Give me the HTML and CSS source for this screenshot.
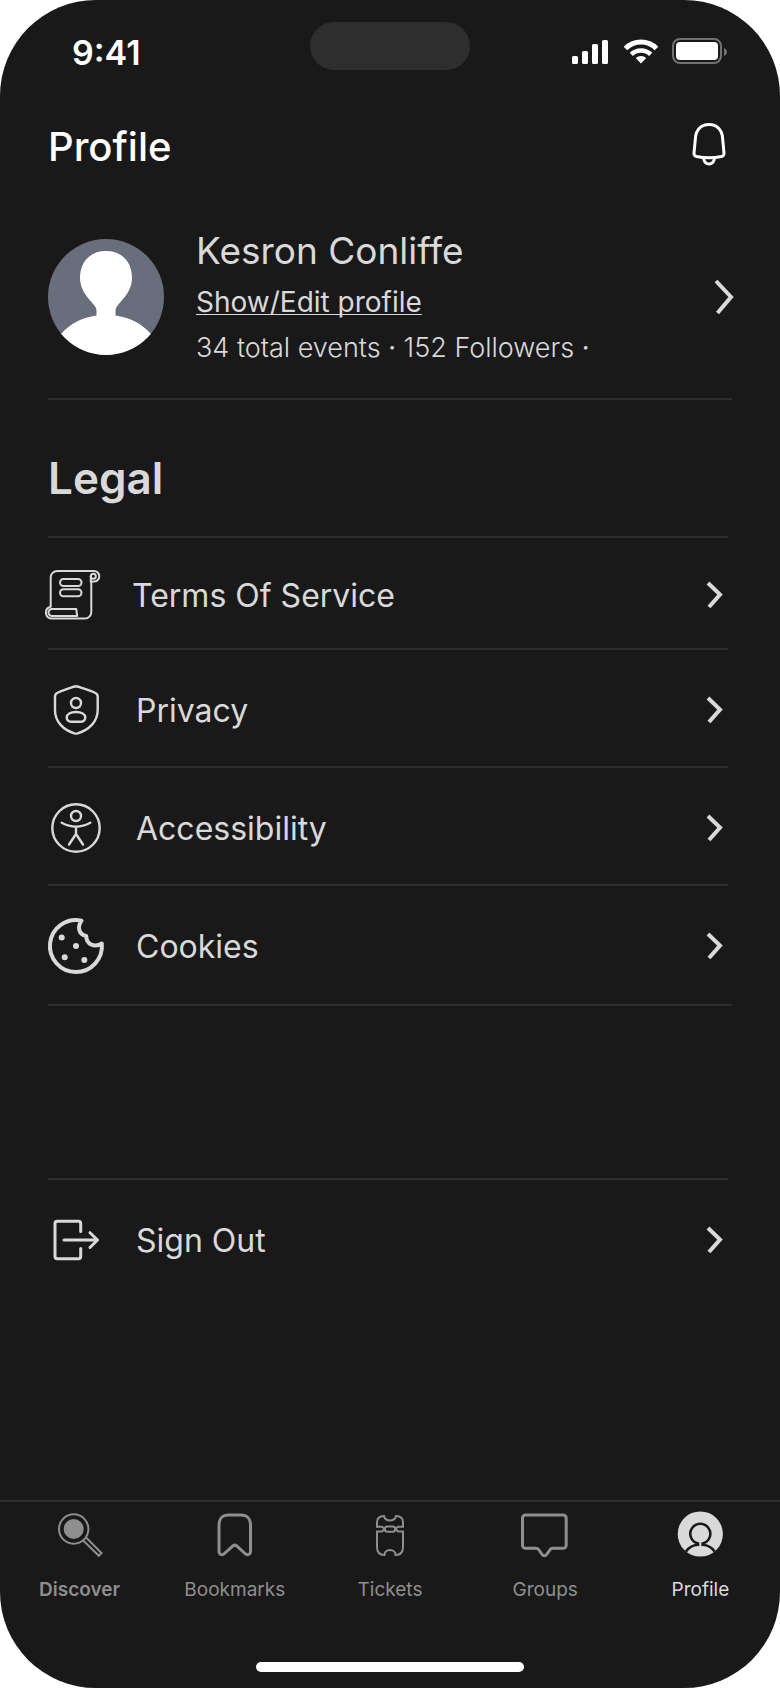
FILE: index.html
```
<!DOCTYPE html>
<html lang="en">
<head>
    <meta charset="UTF-8">
    <meta name="viewport" content="width=device-width, initial-scale=1">
    <title>Profile</title>
    <link rel="stylesheet" href="styles.css">
</head>
<body>
<div class="phone">
    <div class="status-bar">
        <span class="time">9:41</span>
        <span class="island"></span>
        <div class="status-icons">
            <svg width="36" height="28" viewBox="0 0 36 28" fill="#fff">
                <rect x="0" y="18" width="6" height="8" rx="1.5"/>
                <rect x="10" y="13" width="6" height="13" rx="1.5"/>
                <rect x="20" y="6" width="6" height="20" rx="1.5"/>
                <rect x="30" y="2" width="6" height="24" rx="1.5"/>
            </svg>
            <svg width="36" height="28" viewBox="0 0 36 28" fill="none" stroke="#fff">
                <path d="M3.500 10.500a22 22 0 0 1 31 0" stroke-width="5"/>
                <path d="M9.300 16.400a14 14 0 0 1 19.400 0" stroke-width="4.600"/>
                <path d="M19 25.500l-5.300-5.400a8 8 0 0 1 10.600 0z" fill="#fff" stroke="none"/>
            </svg>
            <svg width="56" height="28" viewBox="0 0 56 28">
                <rect x="1" y="1" width="48" height="24" rx="7" fill="none" stroke="#717171" stroke-width="2"/>
                <rect x="4" y="4" width="42" height="18" rx="4" fill="#fff"/>
                <path d="M52 10c4 1.500 4 6.500 0 8z" fill="#717171"/>
            </svg>
        </div>
    </div>

    <header>
        <h1>Profile</h1>
        <button type="button" class="bell" aria-label="Notifications">
            <svg width="44" height="48" viewBox="0 0 44 48" fill="none" stroke="#fff" stroke-width="3">
                <path d="M21 2.500c-8 0-13 5.500-13.500 13L6 31c-.2 2 .5 3 2.500 3.500 8 1.600 17 1.600 25 0 2-.5 2.700-1.500 2.500-3.500l-1.500-15.500C34 8 29 2.500 21 2.500z"/>
                <path d="M15.500 36.500c.8 3.500 2.700 5.500 5.500 5.500s4.700-2 5.500-5.500"/>
            </svg>
        </button>
    </header>

    <main>
        <section class="user">
            <svg class="avatar" width="116" height="116" viewBox="0 0 116 116">
                <clipPath id="round"><circle cx="58" cy="58" r="58"/></clipPath>
                <g clip-path="url(#round)">
                    <rect width="116" height="116" fill="#686e7b"/>
                    <path d="M58 12C41 12 32 24 32 39c0 12 8 20 14 27 2 2.300 2.500 4 2.500 6v4.500C34 79 24 83 13 95v21h90V95C92 83 82 79 67.500 76.500V72c0-2 .5-3.700 2.500-6 6-7 14-15 14-27 0-15-9-27-26-27z" fill="#fff"/>
                </g>
            </svg>
            <div class="user-info">
                <h2>Kesron Conliffe</h2>
                <a href="#edit">Show/Edit profile</a>
                <p>34 total events <b>·</b> 152 Followers <b>·</b></p>
            </div>
            <svg class="chevron-large" width="24" height="40" viewBox="0 0 24 40">
                <path d="M8 4l15 16L9.500 36"/>
            </svg>
        </section>
        <hr>

        <h2 class="section-title">Legal</h2>
        <ul class="menu">
            <li>
                <a class="row row-terms" href="#terms">
                    <svg class="icon" viewBox="0 0 56 56" stroke-width="2">
                        <path d="M2.700 39.700V10.500A6.500 6.500 0 0 1 9.200 4H46a5.300 5.300 0 1 1 0 10.600h-2.700V45a6.500 6.500 0 0 1-6.500 6.500H3a6 6 0 0 1-.3-11.800"/>
                        <path d="M28.200 42H4a3.500 3.500 0 0 0 0 7H29.200z"/>
                        <path d="M42.800 15V9.300"/>
                        <circle cx="45.300" cy="9.300" r="2.500"/>
                        <rect x="12" y="12" width="21.500" height="7" rx="3.500"/>
                        <rect x="12" y="22.300" width="21.500" height="7" rx="3.500"/>
                    </svg>
                    <span>Terms Of Service</span>
                    <svg class="chevron" viewBox="0 0 24 32"><path d="M4 4l12 11.500L5 28"/></svg>
                </a>
            </li>
            <li>
                <a class="row" href="#privacy">
                    <svg class="icon" viewBox="0 0 56 56">
                        <path d="M28 4.300c1.500 0 14 4.300 18.500 6.200 2 .8 3.200 2 3.200 4V28c0 12-9 20-20 23.300-1 .4-2.400.4-3.400 0C15.500 48 7 40 7 28V14.500c0-2 1-3.200 3-4C14.500 8.600 26.500 4.300 28 4.300z"/>
                        <circle cx="28" cy="21" r="5"/>
                        <path d="M28 30c-5.500 0-9.300 2.400-9.300 5.500 0 2.500 2 4.300 5 4.300h8.600c3 0 5-1.800 5-4.300C37.300 32.400 33.500 30 28 30z"/>
                    </svg>
                    <span>Privacy</span>
                    <svg class="chevron" viewBox="0 0 24 32"><path d="M4 4l12 11.500L5 28"/></svg>
                </a>
            </li>
            <li>
                <a class="row" href="#accessibility">
                    <svg class="icon" viewBox="0 0 56 56">
                        <circle cx="28" cy="28" r="23.700"/>
                        <circle cx="28" cy="16" r="5"/>
                        <path d="M13.700 22.700c9.500 5.300 19 5.300 28.600 0M28 27v8M21 44.500l7-10.500 7 10.500"/>
                    </svg>
                    <span>Accessibility</span>
                    <svg class="chevron" viewBox="0 0 24 32"><path d="M4 4l12 11.500L5 28"/></svg>
                </a>
            </li>
            <li>
                <a class="row" href="#cookies">
                    <svg class="icon" viewBox="0 0 56 56" stroke-width="4">
                        <path d="M33.500 2.600A26 26 0 1 0 53.800 25.500c-7 4.300-15.600 1-15.600-7.500-7-1.500-9.500-8.500-4.700-15.400z"/>
                        <g fill="#d9d9d9" stroke="none">
                            <circle cx="13.700" cy="19.500" r="3"/>
                            <circle cx="28" cy="28" r="3"/>
                            <circle cx="16.700" cy="39.300" r="3"/>
                            <circle cx="36.300" cy="42" r="3"/>
                        </g>
                    </svg>
                    <span>Cookies</span>
                    <svg class="chevron" viewBox="0 0 24 32"><path d="M4 4l12 11.500L5 28"/></svg>
                </a>
            </li>
        </ul>
        <hr>

        <ul class="menu menu-account">
            <li>
                <a class="row" href="#signout">
                    <svg class="icon" viewBox="0 0 56 56" stroke-width="3">
                        <path d="M32.700 19.500V11.500a2.200 2.200 0 0 0-2.200-2.200H9.200A2.200 2.200 0 0 0 7 11.500v33a2.200 2.200 0 0 0 2.200 2.200h21.300a2.200 2.200 0 0 0 2.200-2.200v-8"/>
                        <path d="M16 28h33M42 20.700l7.500 7.300-7.500 7.500"/>
                    </svg>
                    <span>Sign Out</span>
                    <svg class="chevron" viewBox="0 0 24 32"><path d="M4 4l12 11.500L5 28"/></svg>
                </a>
            </li>
        </ul>
    </main>

    <nav>
        <a class="tab tab-bold" href="#discover">
            <svg viewBox="0 0 48 48" stroke-width="2">
                <circle cx="17.700" cy="19" r="14.700"/>
                <circle cx="17.700" cy="19" r="10" fill="#8e8e8e" stroke="none"/>
                <path d="M29.500 27l16 16-2.700 2.800L26.700 30"/>
            </svg>
            Discover
        </a>
        <a class="tab" href="#bookmarks">
            <svg viewBox="0 0 48 48" stroke-width="3">
                <path d="M8 16C8 8 11 5 18 5h11.500c7 0 10 3 10 11v25c0 3.500-3 5-5.500 2.500l-7.700-7.200c-1.500-1.500-3.500-1.500-5 0l-7.800 7.200C11 46 8 44.500 8 41z"/>
            </svg>
            Bookmarks
        </a>
        <a class="tab" href="#tickets">
            <svg viewBox="0 0 48 48" stroke-width="2">
                <path d="M18 6c-5 0-7 2-7 6.500v4.200h5l2.700 2.300-2.700 2.400h-5V37c0 5.500 2 8 7.500 8 0-3 2.500-5 5.500-5s5.500 2 5.500 5c5.500 0 7.500-2.500 7.500-8V21.400h-5L29.300 19l2.700-2.300h5v-4.200C37 8 35 6 30 6c-.8 3-3 4.500-6 4.500S18.800 9 18 6z"/>
                <rect x="18.700" y="16.400" width="10.600" height="5.300" rx="2.600"/>
            </svg>
            Tickets
        </a>
        <a class="tab" href="#groups">
            <svg viewBox="0 0 48 48" stroke-width="3">
                <path d="M4.500 5h37.700a3 3 0 0 1 3 3v27.300a3 3 0 0 1-3 3H32c-1.500 0-2.500.5-3.200 1.700l-3 4.300c-1.300 2-3.500 2-4.800 0l-3-4.300c-.8-1.200-1.800-1.700-3.200-1.700H4.500a3 3 0 0 1-3-3V8a3 3 0 0 1 3-3z"/>
            </svg>
            Groups
        </a>
        <a class="tab tab-active" href="#profile" aria-current="page">
            <svg viewBox="0 0 48 48" stroke-width="2.600">
                <circle cx="24.300" cy="24" r="22.600" fill="#d9d9d9" stroke="none"/>
                <path d="M10 41.500c2.700-4 6.500-6.300 12-6.700v-1.300a10 10 0 1 1 4.600 0v1.300c5.500.4 9.300 2.700 12 6.700" stroke="#191919"/>
            </svg>
            Profile
        </a>
    </nav>
    <div class="home-indicator"></div>
</div>
</body>
</html>
```
FILE: styles.css
```
* {
    box-sizing: border-box;
}
body {
    margin: 0;
    background-color: #ffffff;
    color: #d9d9d9;
    font-family: Inter, "Liberation Sans", sans-serif;
}
h1, h2, p, ul {
    margin: 0;
    padding: 0;
}
a {
    color: inherit;
    text-decoration: none;
}
svg {
    display: block;
    flex-shrink: 0;
    overflow: visible;
}
hr {
    height: 2px;
    margin: 0;
    border: none;
    background-color: #2e2e2e;
}
.phone {
    display: flex;
    flex-direction: column;
    min-height: 100vh;
    background-color: #191919;
    border-radius: 96px;
    overflow: hidden;
}

/* status bar */
.status-bar {
    display: grid;
    grid-template-columns: 1fr 160px 1fr;
    align-items: center;
    height: 104px;
    padding: 0 52px 0 72px;
    color: #ffffff;
    position: relative;
}
.time {
    font-size: 34px;
    font-weight: 600;
}
.island {
    position: absolute;
    top: 22px;
    left: 50%;
    width: 160px;
    height: 48px;
    margin-left: -80px;
    border-radius: 24px;
    background-color: #2e2e2e;
}
.status-icons {
    grid-column: 3;
    display: flex;
    justify-content: flex-end;
    gap: 14px;
}

header {
    display: flex;
    align-items: center;
    justify-content: space-between;
    height: 84px;
    padding: 0 48px;
    color: #ffffff;
}
header h1 {
    font-size: 40px;
    font-weight: 500;
}
.bell {
    padding: 0;
    border: none;
    background: none;
    cursor: pointer;
}

main {
    padding: 0 48px;
}
.user {
    display: flex;
    align-items: center;
    padding: 37px 0 29px;
}
.user-info {
    flex: 1;
    margin-left: 32px;
}
.user-info h2 {
    font-size: 37px;
    font-weight: 400;
    line-height: 52px;
}
.user-info a {
    display: inline-block;
    font-size: 28px;
    font-weight: 400;
    line-height: 50px;
    vertical-align: top;
    text-decoration: underline;
    text-decoration-thickness: 1px;
    text-decoration-skip-ink: none;
    text-underline-offset: 2px;
}
.user-info p {
    font-size: 27px;
    font-weight: 300;
    line-height: 42px;
}
.chevron-large,
.chevron {
    fill: none;
    stroke: #d9d9d9;
    stroke-width: 4;
}

.section-title {
    padding: 50px 0 30px;
    font-size: 44px;
    font-weight: 600;
    line-height: 56px;
}
.menu {
    margin: 0 4px 2px 0;
    list-style: none;
}
.menu-account {
    margin-top: 172px;
}
.row {
    display: flex;
    align-items: center;
    gap: 32px;
    min-height: 118px;
    padding-top: 4px;
    border-top: 2px solid #2e2e2e;
    font-size: 32px;
}
.row-terms {
    gap: 28px;
    min-height: 112px;
}
.row span {
    flex: 1;
}
.icon {
    width: 56px;
    height: 56px;
    fill: none;
    stroke: #d9d9d9;
    stroke-linecap: round;
    stroke-linejoin: round;
}
.icon:not([stroke-width]) {
    stroke-width: 2.4;
}
.chevron {
    width: 24px;
    height: 32px;
}

/* bottom tabs */
nav {
    display: grid;
    grid-template-columns: repeat(5, 1fr);
    margin-top: auto;
    padding: 8px 2px 60px;
    border-top: 2px solid #2e2e2e;
}
.tab {
    display: flex;
    flex-direction: column;
    align-items: center;
    gap: 20px;
    color: #8e8e8e;
    font-size: 19px;
    line-height: 24px;
}
.tab svg {
    width: 48px;
    height: 48px;
    fill: none;
    stroke: #8e8e8e;
}
.tab-bold {
    font-weight: 600;
}
.tab-active {
    color: #d9d9d9;
}
.home-indicator {
    width: 268px;
    max-width: 60%;
    height: 10px;
    margin: 0 auto 16px;
    border-radius: 5px;
    background-color: #ffffff;
}
```
